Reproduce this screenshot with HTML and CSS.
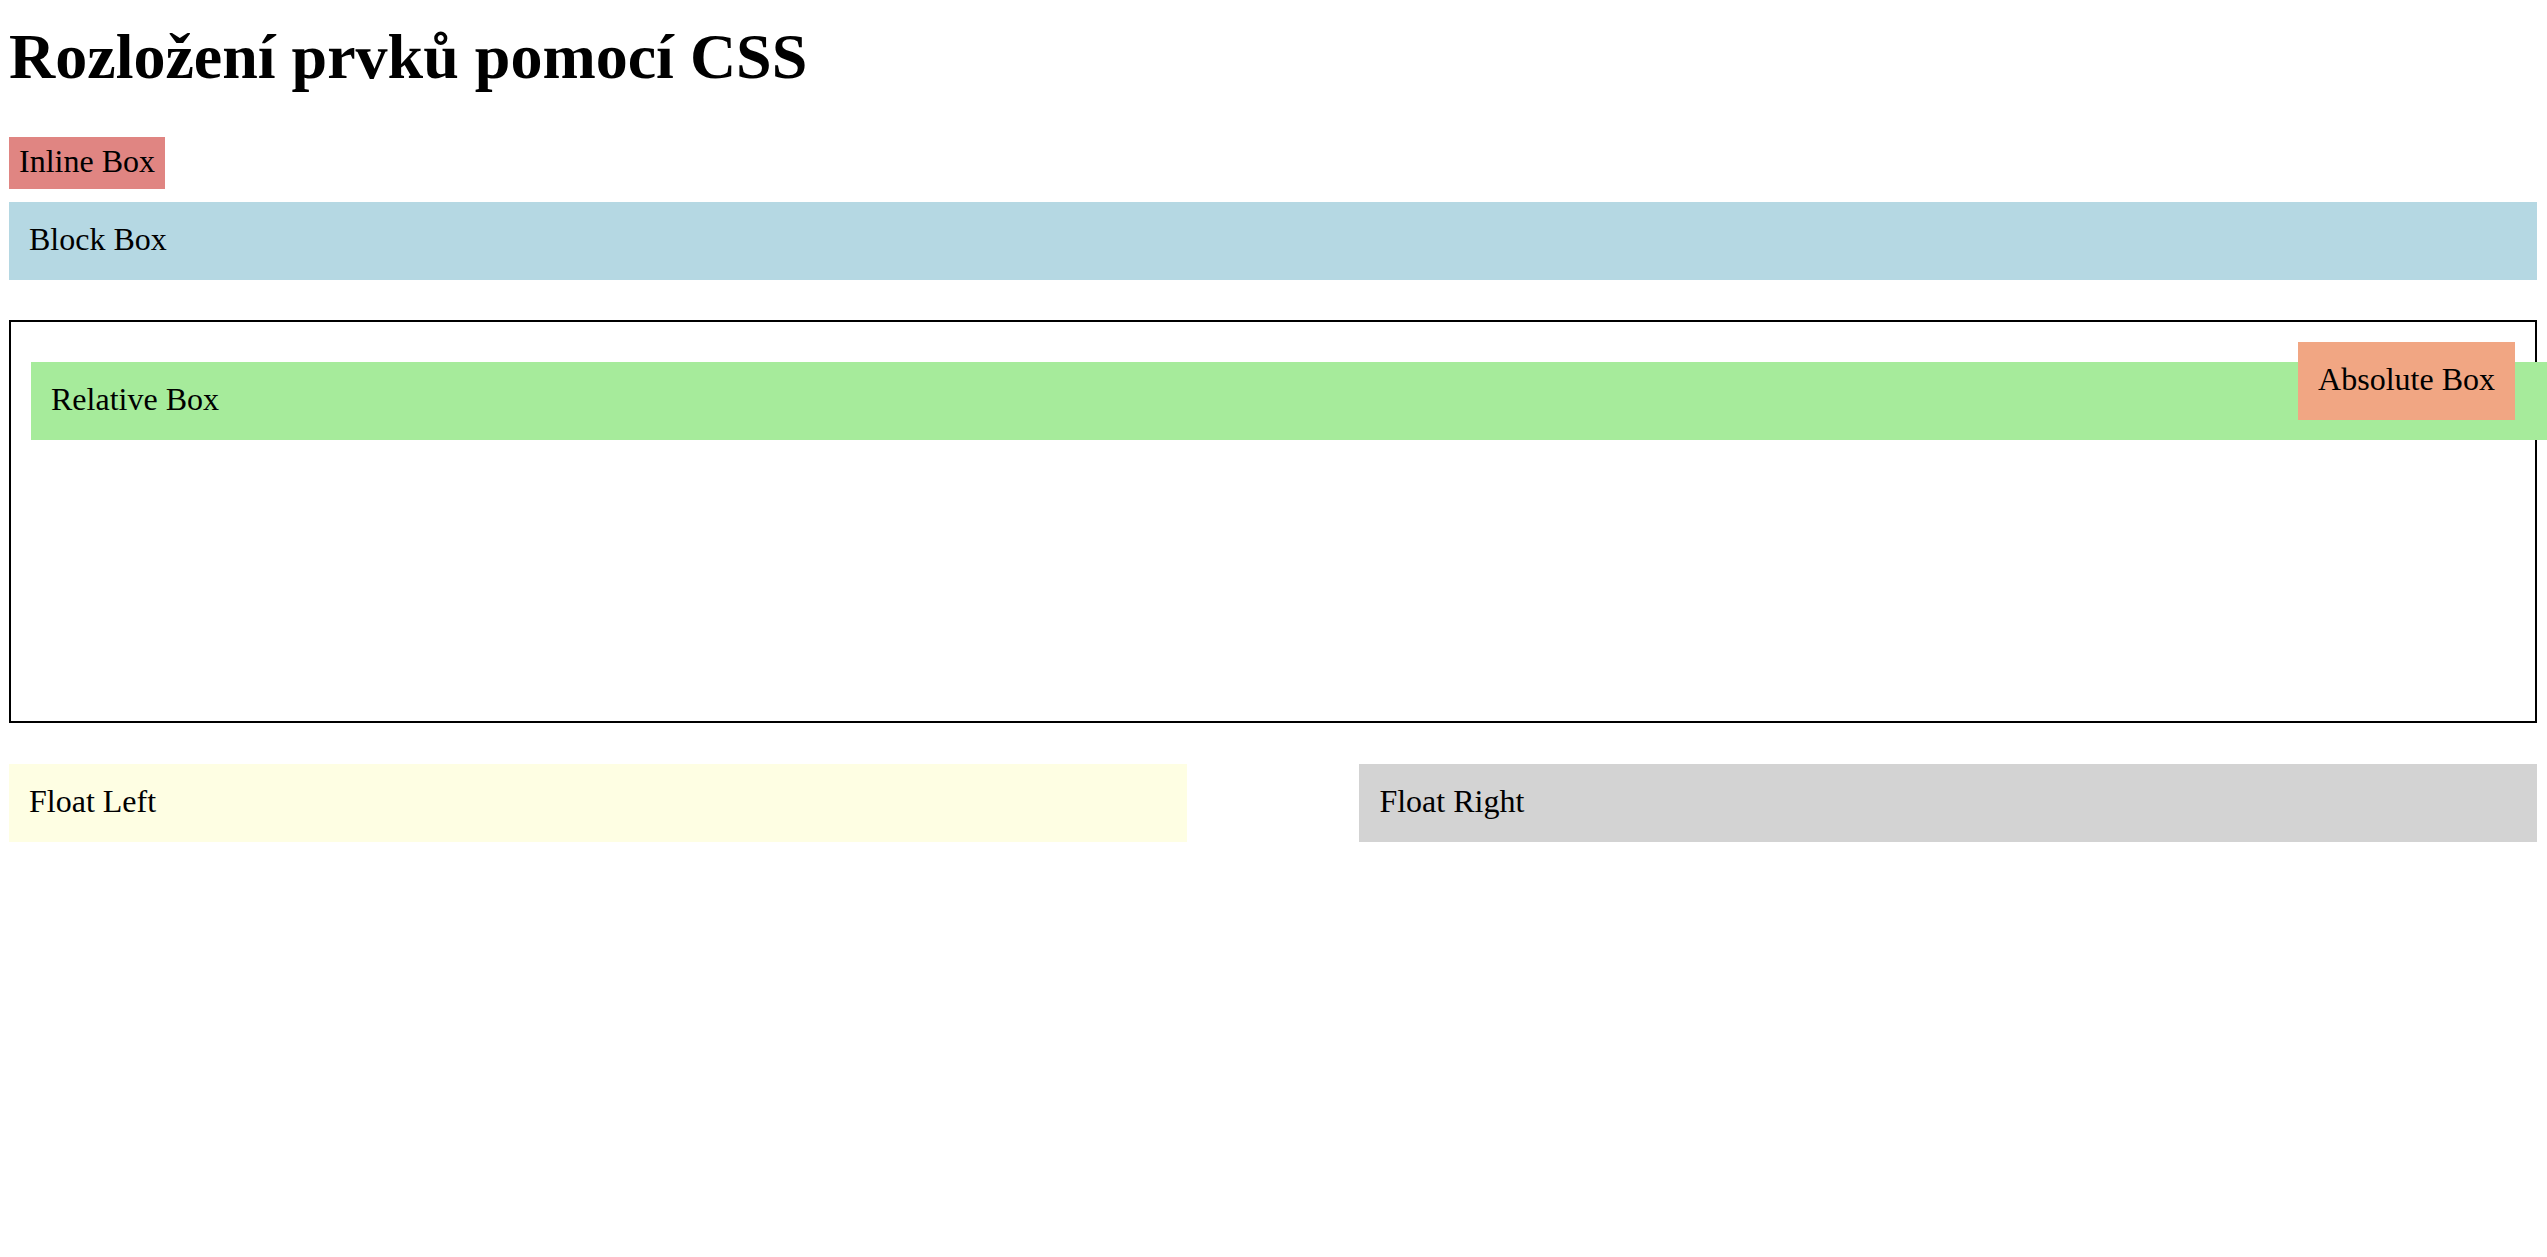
FILE: index.html
```html
<!DOCTYPE html>
<html lang="cs">
<head>
<meta charset="utf-8">
<title>Rozložení prvků pomocí CSS</title>
<link rel="stylesheet" href="styles.css">
</head>
<body>
<h1 class="title">Rozložení prvků pomocí CSS</h1>
<div class="inline-box">Inline Box</div>
<div class="block-box">Block Box</div>
<div class="container">
  <div class="relative-box">Relative Box</div>
  <div class="absolute-box">Absolute Box</div>
</div>
<div class="float-row">
  <div class="float-left">Float Left</div>
  <div class="float-right">Float Right</div>
</div>
</body>
</html>
```

FILE: styles.css
```css
html {
  overflow-x: hidden;
}
body {
  margin: 0;
  padding: 0 10px 0 9px;
  font-family: "Liberation Serif", "Times New Roman", serif;
  font-size: 32px;
  line-height: 38px;
  color: #000;
  background: #fff;
  overflow-x: hidden;
}
.title {
  font-size: 64px;
  line-height: 74px;
  font-weight: bold;
  margin: 20px 0 43px;
}
.inline-box {
  width: fit-content;
  background: #e08582;
  padding: 5px 10px 9px;
}
.block-box {
  margin-top: 13px;
  background: #b5d8e3;
  padding: 18px 20px 22px;
}
.container {
  position: relative;
  margin-top: 40px;
  border: 2px solid #000;
  padding: 20px;
  height: 359px;
}
.relative-box {
  margin-top: 20px;
  width: 100%;
  background: #a6eb9b;
  padding: 18px 20px 22px;
}
.absolute-box {
  position: absolute;
  top: 20px;
  right: 20px;
  background: #f1a683;
  padding: 18px 20px 22px;
}
.float-row {
  margin-top: 41px;
  display: flex;
  justify-content: space-between;
}
.float-left,
.float-right {
  width: 45%;
  padding: 18px 20px 22px;
}
.float-left {
  background: #fefee3;
}
.float-right {
  background: #d3d3d3;
}
```
